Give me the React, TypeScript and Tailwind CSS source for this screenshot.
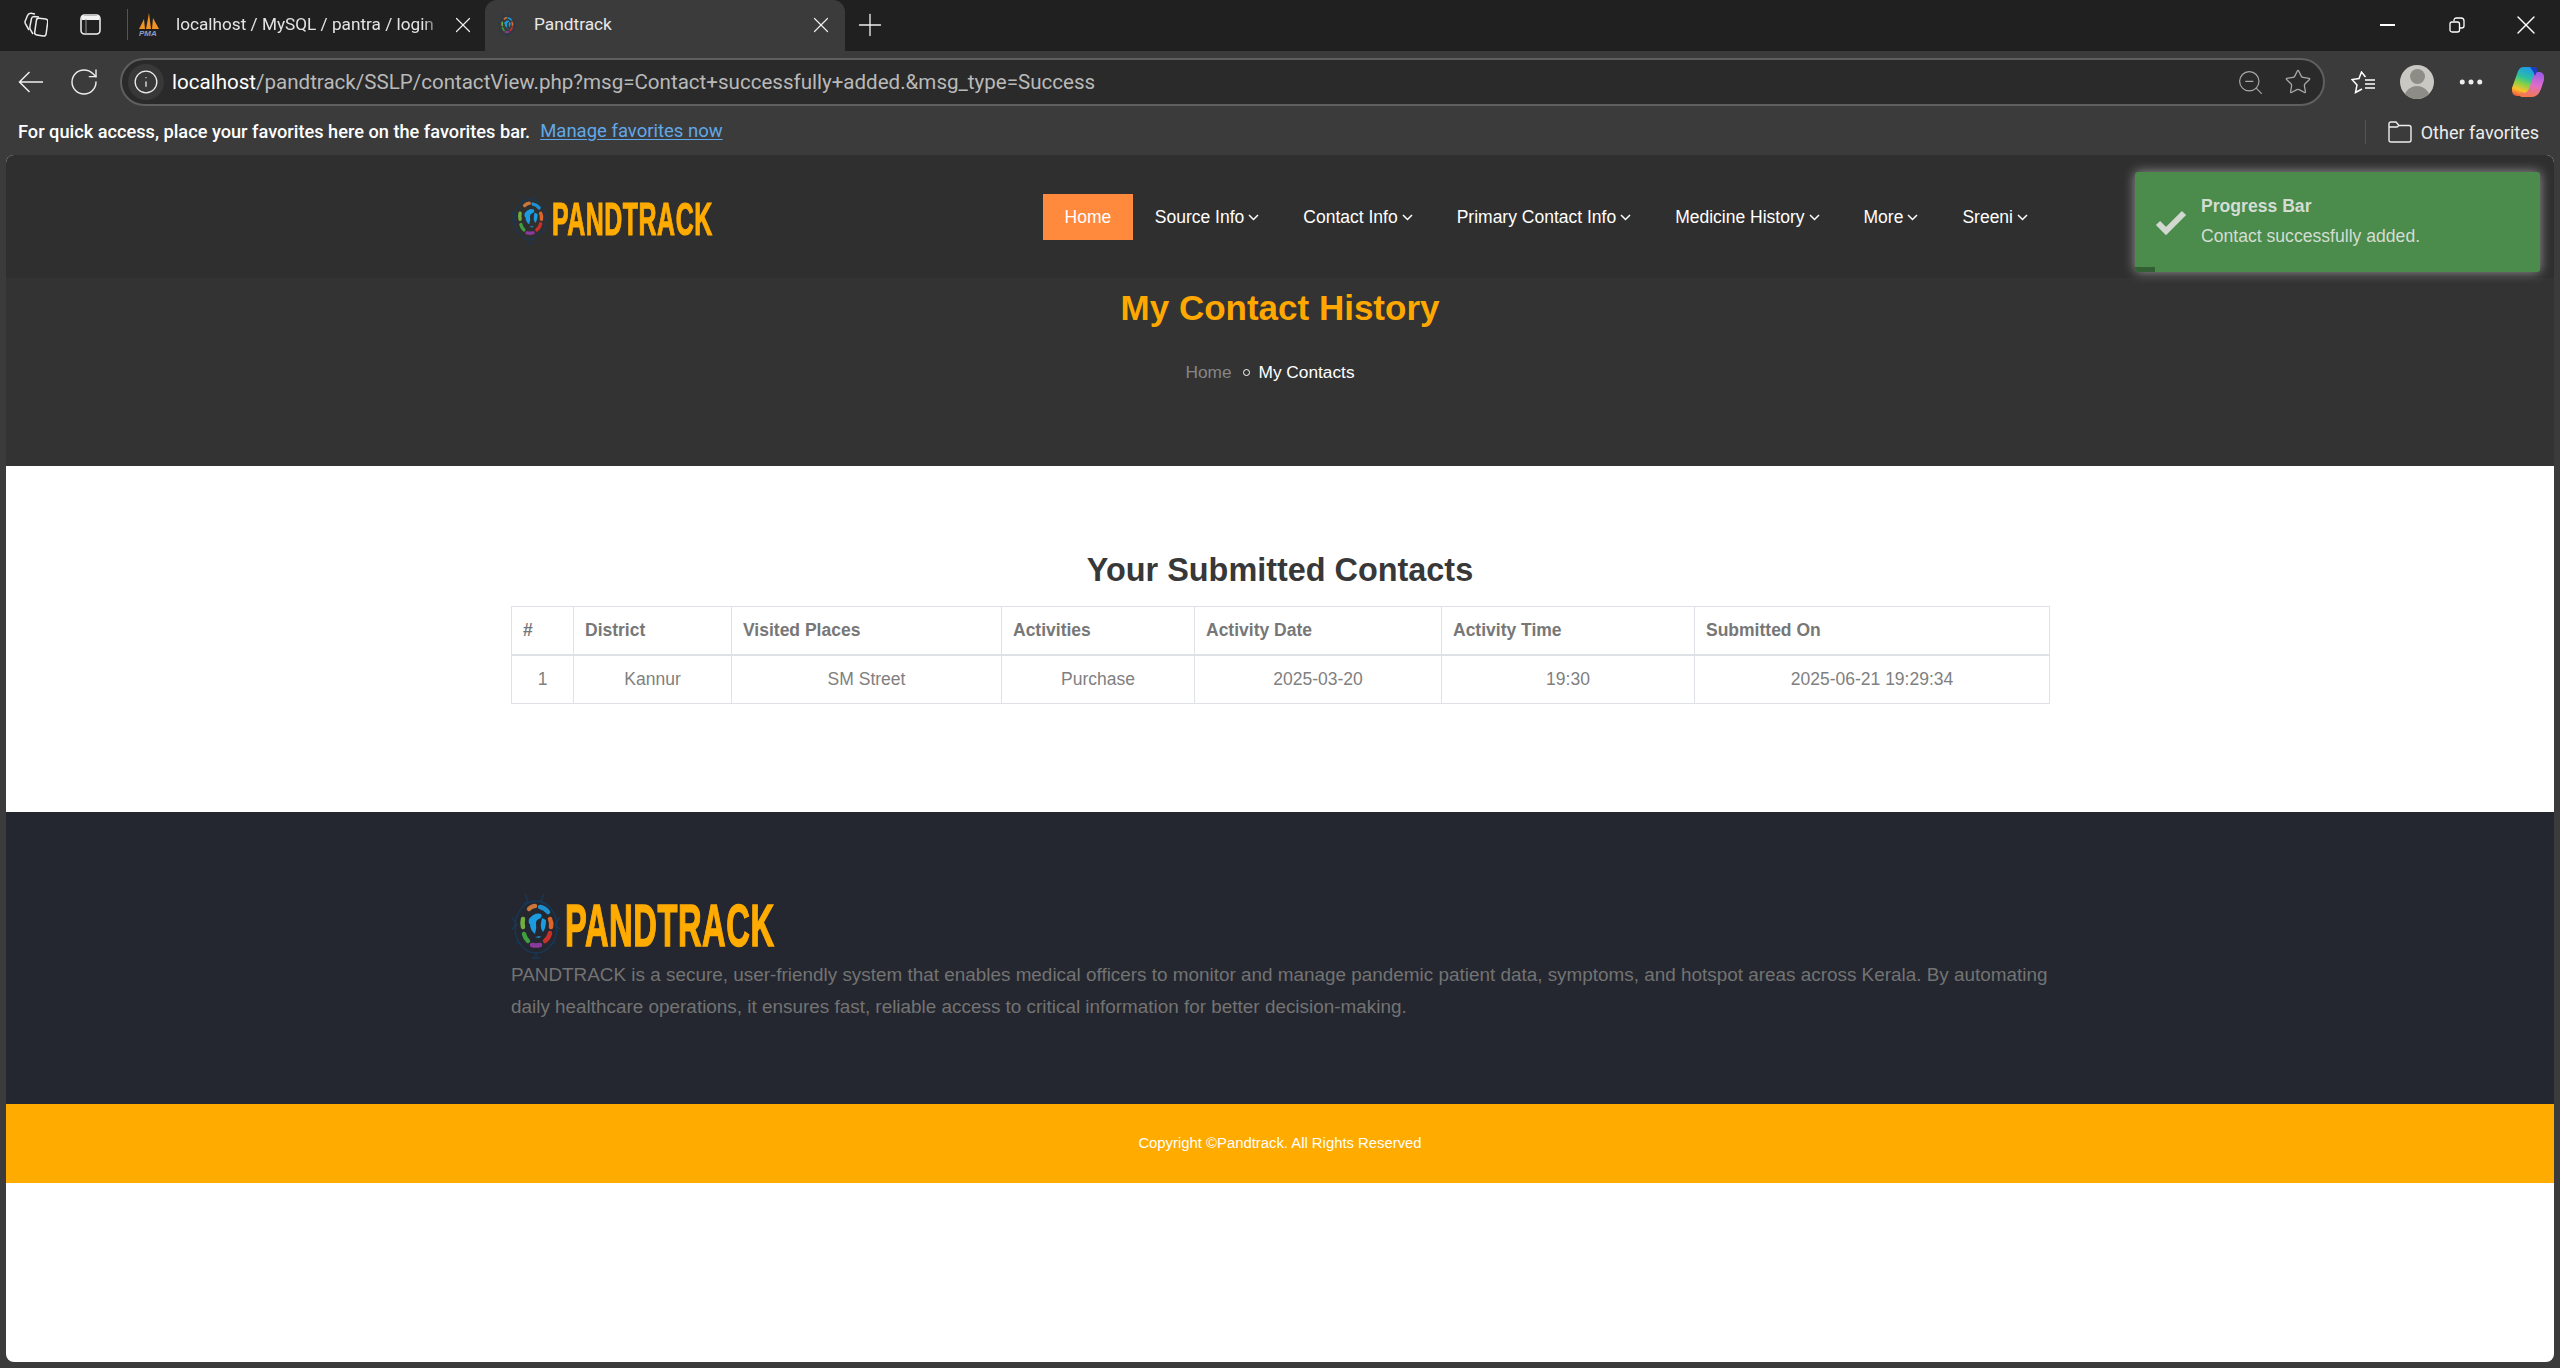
import { Info, MoreHorizontal, Plus, RotateCw, Star, X, ZoomOut } from "lucide-react";

const menu = ["Source Info", "Contact Info", "Primary Contact Info", "Medicine History", "More", "Sreeni"];
const columns = [
  { name: "#", width: "w-[62px]" },
  { name: "District", width: "w-[158px]" },
  { name: "Visited Places", width: "w-[270px]" },
  { name: "Activities", width: "w-[193px]" },
  { name: "Activity Date", width: "w-[247px]" },
  { name: "Activity Time", width: "w-[253px]" },
  { name: "Submitted On", width: "w-[355px]" },
];
const row = ["1", "Kannur", "SM Street", "Purchase", "2025-03-20", "19:30", "2025-06-21 19:29:34"];

function Globe({ className }: { className: string }) {
  return (
    <svg viewBox="0 0 50 66" className={className} fill="none">
      <g stroke="#16395a" strokeWidth="1.3">
        <ellipse cx="25" cy="34" rx="21" ry="26" />
        <path d="M14 1l3 7-4 3M33 1l-3 7 4 3M1 24l5 8-5 4M49 24l-5 8 5 4M5 49l6 3M45 49l-6 3M25 60v5M21 65h8" />
      </g>
      <g strokeWidth="4.5" strokeLinecap="round">
        <path d="M18 16q3-3 6-3" stroke="#c9773a" />
        <path d="M29 14q5 1 8 5" stroke="#1f8fd0" />
        <path d="M39 26q2 4 1 8" stroke="#d9662b" />
        <path d="M12 26q-1 4 0 8" stroke="#6fae3f" />
        <path d="M13 41q1 4 4 7" stroke="#3f9e3f" />
        <path d="M39 40q-1 5-5 8" stroke="#c8302c" />
        <path d="M21 52q4 1 8 0" stroke="#8a3a9c" />
      </g>
      <path d="M18 26q6-7 12-5 2 3-2 5-3 1-3 4 1 5-1 11-5-4-5-10-2 0-1-5z" fill="#1b9be0" />
      <path d="M31 25l4 2q0 8-3 12-3-4-2-9z" fill="#1b9be0" />
      <path d="M24 44l6-1-2 2z" fill="#1b9be0" />
    </svg>
  );
}

function Logo({ footer }: { footer?: boolean }) {
  if (footer) {
    return (
      <div className="flex h-[66px] items-center">
        <Globe className="h-[66px] w-[50px] shrink-0" />
        <div className="ml-[4px] h-[44px] w-[207px]">
          <span className="block origin-top-left scale-x-[0.545] whitespace-nowrap text-[60px] font-bold leading-[44px] tracking-[1px] text-[#ffab00] [-webkit-text-stroke:1.5px_#ffab00] [font-family:'Liberation_Sans',sans-serif]">
            PANDTRACK
          </span>
        </div>
      </div>
    );
  }
  return (
    <div className="flex h-[51px] items-center">
      <Globe className="h-[51px] w-[38px] shrink-0" />
      <div className="ml-[3px] h-[35px] w-[161px]">
        <span className="block origin-top-left scale-x-[0.53] whitespace-nowrap text-[47px] font-bold leading-[35px] tracking-[1px] text-[#ffab00] [-webkit-text-stroke:1.2px_#ffab00] [font-family:'Liberation_Sans',sans-serif]">
          PANDTRACK
        </span>
      </div>
    </div>
  );
}

function TabBar() {
  return (
    <div className="flex h-[51px] items-end bg-[#202020] text-white">
      <div className="flex h-full w-[128px] shrink-0 items-center pb-[2px] pl-[24px]">
        <svg viewBox="0 0 24 25" className="h-[25px] w-[24px] shrink-0" fill="none" stroke="#ececec" strokeWidth="1.5">
          <rect x="11.500" y="6.500" width="11.500" height="17" rx="2.500" transform="rotate(8 17 15)" />
          <path d="M9 22 6.500 18Q5.500 16 6 14L7.500 6.500Q8 4.500 10 4.500L15 5" />
          <path d="M5 18 1.500 12Q.5 10 1.500 8.500L3.500 3.500Q4.500 1 7 1.200L11 2" />
        </svg>
        <svg viewBox="0 0 21 21" className="ml-[32px] h-[21px] w-[21px] shrink-0" fill="none" stroke="#f2f2f2" strokeWidth="1.500">
          <rect x="1" y="1" width="19" height="19" rx="3.500" />
          <path d="M1.500 4h18" strokeWidth="4" />
          <path d="M6 5v15" strokeWidth="1" stroke="#9a9a9a" />
        </svg>
        <div className="ml-[26px] h-[31px] w-px shrink-0 bg-[#555]" />
      </div>
      <div className="flex h-full w-[357px] shrink-0 items-center pb-[2px] pl-[10px]">
        <svg viewBox="0 0 23 23" className="h-[23px] w-[23px] shrink-0">
          <path d="M1 16 6 6l1 10zM8 16l3-16 2 16zM14 16l1-11 6 11z" fill="#f29423" />
          <text x="1" y="22.500" fontSize="8" fontWeight="700" fontStyle="italic" fill="#8a9ccc" fontFamily="Liberation Sans, sans-serif">PMA</text>
        </svg>
        <span className="ml-[15px] w-[268px] overflow-hidden whitespace-nowrap text-[17.200px] text-[#e4e4e4] [font-family:Roboto,sans-serif] [mask-image:linear-gradient(to_right,black_92%,transparent)]">
          localhost / MySQL / pantra / login
        </span>
        <X className="ml-[6px] shrink-0" size={26} strokeWidth={1.1} color="#eee" />
      </div>
      <div className="flex h-full w-[360px] shrink-0 items-center rounded-t-[12px] bg-[#3b3b3b] pb-[2px] pl-[11px]">
        <Globe className="h-[24px] w-[22px] shrink-0" />
        <span className="ml-[16px] text-[17.300px] text-[#e8e8e8] [font-family:Roboto,sans-serif]">Pandtrack</span>
        <X className="ml-auto mr-[11px] shrink-0" size={26} strokeWidth={1.1} color="#eee" />
      </div>
      <div className="flex h-full items-center pb-[1px] pl-[7px]">
        <Plus size={36} strokeWidth={0.9} color="#eee" />
      </div>
      <div className="ml-auto flex h-full items-center pb-[1px] pr-[18px]">
        <div className="h-[2px] w-[15px] bg-white" />
        <svg viewBox="0 0 16 16" className="ml-[54px] h-[16px] w-[16px]" fill="none" stroke="#fff" strokeWidth="1.3">
          <rect x="1" y="5" width="9.500" height="10" rx="2" />
          <path d="M5 4V3.500Q5 1 7.500 1H12Q15 1 15 4v5q0 2-2.500 2H11" />
        </svg>
        <X className="ml-[45px]" size={32} strokeWidth={1} color="#fff" />
      </div>
    </div>
  );
}

function AddressBar() {
  return (
    <div className="flex h-[62px] items-center bg-[#3b3b3b] text-white">
      <div className="flex w-[120px] shrink-0 items-center pl-[18px]">
        <svg viewBox="0 0 25 22" className="h-[22px] w-[25px] shrink-0" fill="none" stroke="#eee" strokeWidth="1.500">
          <path d="M25 11H1.500M11.500 1 1.500 11l10 10" />
        </svg>
        <RotateCw className="ml-[25px] shrink-0" size={32} strokeWidth={1.05} color="#eee" />
      </div>
      <div className="flex h-[48px] w-[2205px] shrink-0 items-center rounded-full border-2 border-[#5f5f5f] bg-[#2a2a2a] pl-[6px]">
        <div className="flex h-[36px] w-[36px] shrink-0 items-center justify-center rounded-full bg-[#383838]">
          <Info size={26} strokeWidth={1.2} color="#ececec" />
        </div>
        <span className="ml-[8px] whitespace-nowrap text-[20.550px] text-[#b9b9b9] [font-family:Roboto,sans-serif]">
          <span className="text-white">localhost</span>/pandtrack/SSLP/contactView.php?msg=Contact+successfully+added.&amp;msg_type=Success
        </span>
        <ZoomOut className="ml-auto" size={29} strokeWidth={1} color="#a8a8a8" />
        <Star className="ml-[19px] mr-[11px]" size={28} strokeWidth={1.1} color="#a8a8a8" />
      </div>
      <div className="flex flex-1 items-center pl-[26px]">
        <svg viewBox="0 0 24 23" className="h-[23px] w-[24px] shrink-0" fill="none" stroke="#fff" strokeWidth="1.500">
          <path d="M14.500 6 10.500 1 8 7.500 1 8.500 6 14 4.500 21.500 11 18" />
          <path d="M14 9h10M14 13h10M14 17h10" />
        </svg>
        <div className="ml-[25px] flex h-[34px] w-[34px] shrink-0 items-end justify-center overflow-hidden rounded-full bg-[#c9c8c3]">
          <div className="h-[30px] w-[26px]">
            <div className="mx-auto h-[15px] w-[15px] rounded-full bg-[#8d8c87]" />
            <div className="mt-[2px] h-[14px] w-[26px] rounded-t-full bg-[#8d8c87]" />
          </div>
        </div>
        <MoreHorizontal className="ml-[22px] shrink-0" size={30} strokeWidth={2} color="#eee" />
        <svg viewBox="0 0 33 32" className="ml-[25px] h-[32px] w-[33px] shrink-0">
          <defs>
            <linearGradient id="cpA" x1="0.6" y1="0" x2="0.3" y2="1">
              <stop offset="0" stopColor="#1f9ae8" />
              <stop offset="0.35" stopColor="#2bc0a0" />
              <stop offset="0.55" stopColor="#7ed04b" />
              <stop offset="0.8" stopColor="#f9c22b" />
              <stop offset="1" stopColor="#f2613f" />
            </linearGradient>
            <linearGradient id="cpB" x1="0.6" y1="0" x2="0.4" y2="1">
              <stop offset="0" stopColor="#9a5ae6" />
              <stop offset="0.5" stopColor="#e06ccb" />
              <stop offset="1" stopColor="#f47a4a" />
            </linearGradient>
          </defs>
          <path d="M12 1h10q4 0 3 4L17 27q-1 3-5 3H6Q0 29 1 22L6 8q2-7 6-7z" fill="url(#cpA)" />
          <path d="M21 31H11q-3 0-2-3l1-2q1 1 3 1 3 0 5-4l5-15q1-2 4-2h2q5 1 4 8l-3 9q-3 8-9 8z" fill="url(#cpB)" />
          <path d="M19 1h4q4 0 3 4l-2 5q-1-4-5-9z" fill="#1b3fc4" />
        </svg>
      </div>
    </div>
  );
}

function FavoritesBar() {
  return (
    <div className="flex h-[42px] items-center bg-[#3b3b3b] pb-[4px] pl-[18px] pr-[21px] [font-family:Roboto,sans-serif]">
      <span className="text-[18.200px] font-medium text-white">For quick access, place your favorites here on the favorites bar.</span>
      <span className="ml-[10px] text-[18.500px] text-[#62a8e8] underline underline-offset-2">Manage favorites now</span>
      <div className="ml-auto h-[24px] w-px bg-[#555]" />
      <svg viewBox="0 0 24 22" className="ml-[22px] h-[22px] w-[24px]" fill="none" stroke="#eee" strokeWidth="1.400">
        <path d="M1 3q0-2 2-2h5l3 3.500h10q2 0 2 2V19q0 2-2 2H3q-2 0-2-2z" />
        <path d="M1 6h8l2-1.500" />
      </svg>
      <span className="ml-[9px] text-[18px] text-[#ededed]">Other favorites</span>
    </div>
  );
}

function Toast() {
  return (
    <div className="absolute right-[14px] top-[17px] flex h-[100px] w-[405px] items-center overflow-hidden rounded-[3px] bg-[#4b8b4b] text-[#d3ddd3] shadow-[0_0_12px_#999] [font-family:'Liberation_Sans',sans-serif]">
      <svg viewBox="0 0 32 26" className="ml-[20px] h-[26px] w-[32px] shrink-0" fill="none" stroke="#d0d8d0" strokeWidth="6">
        <path d="M3 14l8 8L29 4" />
      </svg>
      <div className="-mt-[2px] ml-[14px]">
        <div className="text-[17.600px] font-bold leading-[22px]">Progress Bar</div>
        <div className="mt-[8px] text-[17.600px] leading-[22px]">Contact successfully added.</div>
      </div>
      <div className="absolute bottom-0 left-0 h-[5px] w-[20px] bg-[#336033]" />
    </div>
  );
}

export default function App() {
  return (
    <div className="flex h-[1368px] flex-col overflow-hidden bg-[#3b3b3b]">
      <TabBar />
      <AddressBar />
      <FavoritesBar />
      <div className="relative mx-[6px] mb-[6px] flex-1 overflow-hidden rounded-[8px] bg-white [font-family:'Liberation_Sans',sans-serif]">
        <Toast />
        <div className="flex h-[123px] items-start bg-[#2f2f2f] pl-[505px] pr-[504px] pt-[39px]">
          <div className="-mt-[1px]">
            <Logo />
          </div>
          <nav className="ml-auto flex items-center">
            <a className="flex h-[46px] items-center bg-[#ff8a3d] px-[21.500px] text-[17.500px] text-white">Home</a>
            {menu.map((item) => (
              <a key={item} className="flex h-[46px] items-center gap-[4px] px-[22px] text-[17.500px] text-white">
                {item}
                <svg viewBox="0 0 11 7" className="h-[7px] w-[11px]" fill="none" stroke="#fff" strokeWidth="1.500">
                  <path d="M1 1l4.500 4.500L10 1" />
                </svg>
              </a>
            ))}
          </nav>
        </div>
        <div className="flex h-[188px] flex-col items-center bg-[#333333]">
          <h1 className="mt-[8px] text-[35px] font-bold leading-[44px] text-[#ffa800]">My Contact History</h1>
          <div className="mt-[30px] flex items-center pr-[20px] text-[17.300px] leading-[24px]">
            <span className="text-[#868686]">Home</span>
            <span className="ml-[11px] h-[7px] w-[7px] rounded-full border border-white" />
            <span className="ml-[9px] text-white">My Contacts</span>
          </div>
        </div>
        <div className="h-[346px] bg-white pl-[505px] pr-[505px] pt-[82px]">
          <h2 className="text-center text-[32.400px] font-bold leading-[44px] text-[#383838]">Your Submitted Contacts</h2>
          <table className="mt-[14px] w-[1538px] table-fixed border-collapse border border-[#dee2e6] text-[17.500px]">
            <thead>
              <tr className="h-[48px]">
                {columns.map((col) => (
                  <th key={col.name} className={`${col.width} border border-b-2 border-[#dee2e6] px-[11px] text-left font-bold text-[#777777]`}>
                    {col.name}
                  </th>
                ))}
              </tr>
            </thead>
            <tbody>
              <tr className="h-[49px]">
                {row.map((cell) => (
                  <td key={cell} className="border border-[#dee2e6] px-[11px] text-center text-[#808080]">
                    {cell}
                  </td>
                ))}
              </tr>
            </tbody>
          </table>
        </div>
        <div className="h-[292px] bg-[#24272f] pl-[505px] pr-[504px] pt-[81px]">
          <Logo footer />
          <p className="text-[18.900px] leading-[32px] text-[#737373]">
            PANDTRACK is a secure, user-friendly system that enables medical officers to monitor and manage pandemic patient data, symptoms, and hotspot areas across Kerala. By automating daily healthcare operations, it ensures fast, reliable access to critical information for better decision-making.
          </p>
        </div>
        <div className="flex h-[79px] items-center justify-center bg-[#ffab00] text-[14.850px] text-white">
          Copyright ©Pandtrack. All Rights Reserved
        </div>
      </div>
    </div>
  );
}
